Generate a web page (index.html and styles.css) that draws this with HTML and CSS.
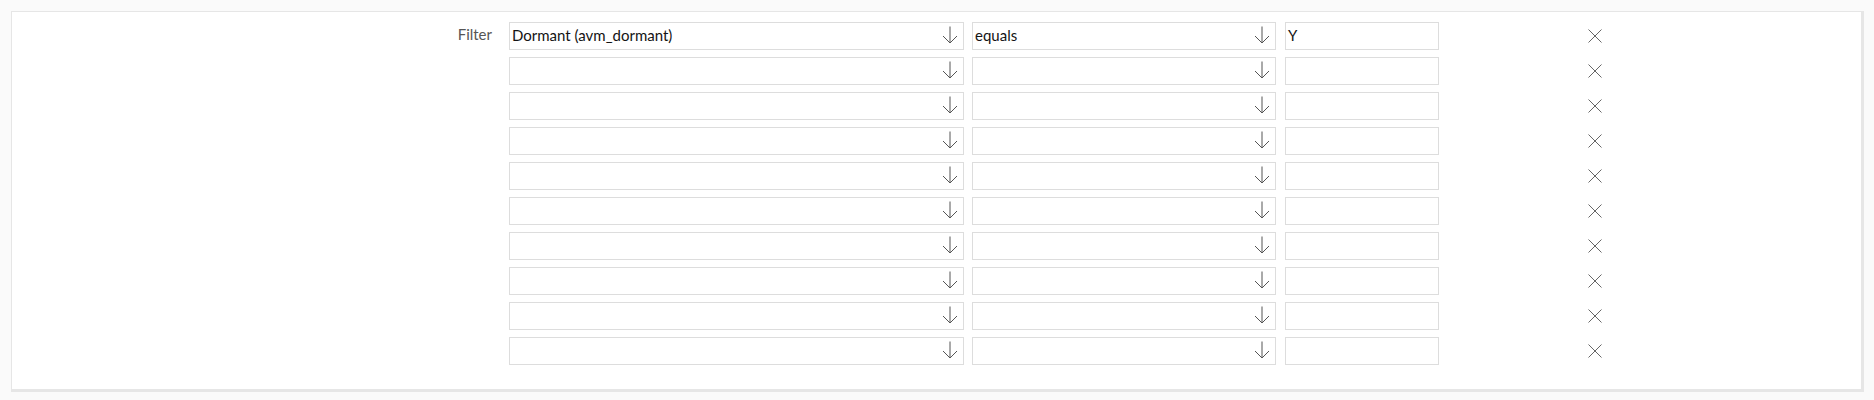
FILE: index.html
```html
<!DOCTYPE html>
<html>
<head>
<meta charset="utf-8">
<link rel="stylesheet" href="styles.css">
</head>
<body>
<div class="page">
  <div class="card">
    <div class="rows">
      <div class="row">
        <div class="label">Filter</div>
        <div class="select field">Dormant (avm_dormant)<svg class="arrow" viewBox="0 0 16 18"><path d="M8 0.5V17M1 10l7 7 7-7"/></svg></div>
        <div class="select op">equals<svg class="arrow" viewBox="0 0 16 18"><path d="M8 0.5V17M1 10l7 7 7-7"/></svg></div>
        <div class="input">Y</div>
        <div class="remove"><svg viewBox="0 0 14 14"><path d="M0.5 0.5l13 13M13.5 0.5l-13 13"/></svg></div>
      </div>
      <div class="row">
        <div class="label"></div>
        <div class="select field"><svg class="arrow" viewBox="0 0 16 18"><path d="M8 0.5V17M1 10l7 7 7-7"/></svg></div>
        <div class="select op"><svg class="arrow" viewBox="0 0 16 18"><path d="M8 0.5V17M1 10l7 7 7-7"/></svg></div>
        <div class="input"></div>
        <div class="remove"><svg viewBox="0 0 14 14"><path d="M0.5 0.5l13 13M13.5 0.5l-13 13"/></svg></div>
      </div>
      <div class="row">
        <div class="label"></div>
        <div class="select field"><svg class="arrow" viewBox="0 0 16 18"><path d="M8 0.5V17M1 10l7 7 7-7"/></svg></div>
        <div class="select op"><svg class="arrow" viewBox="0 0 16 18"><path d="M8 0.5V17M1 10l7 7 7-7"/></svg></div>
        <div class="input"></div>
        <div class="remove"><svg viewBox="0 0 14 14"><path d="M0.5 0.5l13 13M13.5 0.5l-13 13"/></svg></div>
      </div>
      <div class="row">
        <div class="label"></div>
        <div class="select field"><svg class="arrow" viewBox="0 0 16 18"><path d="M8 0.5V17M1 10l7 7 7-7"/></svg></div>
        <div class="select op"><svg class="arrow" viewBox="0 0 16 18"><path d="M8 0.5V17M1 10l7 7 7-7"/></svg></div>
        <div class="input"></div>
        <div class="remove"><svg viewBox="0 0 14 14"><path d="M0.5 0.5l13 13M13.5 0.5l-13 13"/></svg></div>
      </div>
      <div class="row">
        <div class="label"></div>
        <div class="select field"><svg class="arrow" viewBox="0 0 16 18"><path d="M8 0.5V17M1 10l7 7 7-7"/></svg></div>
        <div class="select op"><svg class="arrow" viewBox="0 0 16 18"><path d="M8 0.5V17M1 10l7 7 7-7"/></svg></div>
        <div class="input"></div>
        <div class="remove"><svg viewBox="0 0 14 14"><path d="M0.5 0.5l13 13M13.5 0.5l-13 13"/></svg></div>
      </div>
      <div class="row">
        <div class="label"></div>
        <div class="select field"><svg class="arrow" viewBox="0 0 16 18"><path d="M8 0.5V17M1 10l7 7 7-7"/></svg></div>
        <div class="select op"><svg class="arrow" viewBox="0 0 16 18"><path d="M8 0.5V17M1 10l7 7 7-7"/></svg></div>
        <div class="input"></div>
        <div class="remove"><svg viewBox="0 0 14 14"><path d="M0.5 0.5l13 13M13.5 0.5l-13 13"/></svg></div>
      </div>
      <div class="row">
        <div class="label"></div>
        <div class="select field"><svg class="arrow" viewBox="0 0 16 18"><path d="M8 0.5V17M1 10l7 7 7-7"/></svg></div>
        <div class="select op"><svg class="arrow" viewBox="0 0 16 18"><path d="M8 0.5V17M1 10l7 7 7-7"/></svg></div>
        <div class="input"></div>
        <div class="remove"><svg viewBox="0 0 14 14"><path d="M0.5 0.5l13 13M13.5 0.5l-13 13"/></svg></div>
      </div>
      <div class="row">
        <div class="label"></div>
        <div class="select field"><svg class="arrow" viewBox="0 0 16 18"><path d="M8 0.5V17M1 10l7 7 7-7"/></svg></div>
        <div class="select op"><svg class="arrow" viewBox="0 0 16 18"><path d="M8 0.5V17M1 10l7 7 7-7"/></svg></div>
        <div class="input"></div>
        <div class="remove"><svg viewBox="0 0 14 14"><path d="M0.5 0.5l13 13M13.5 0.5l-13 13"/></svg></div>
      </div>
      <div class="row">
        <div class="label"></div>
        <div class="select field"><svg class="arrow" viewBox="0 0 16 18"><path d="M8 0.5V17M1 10l7 7 7-7"/></svg></div>
        <div class="select op"><svg class="arrow" viewBox="0 0 16 18"><path d="M8 0.5V17M1 10l7 7 7-7"/></svg></div>
        <div class="input"></div>
        <div class="remove"><svg viewBox="0 0 14 14"><path d="M0.5 0.5l13 13M13.5 0.5l-13 13"/></svg></div>
      </div>
      <div class="row">
        <div class="label"></div>
        <div class="select field"><svg class="arrow" viewBox="0 0 16 18"><path d="M8 0.5V17M1 10l7 7 7-7"/></svg></div>
        <div class="select op"><svg class="arrow" viewBox="0 0 16 18"><path d="M8 0.5V17M1 10l7 7 7-7"/></svg></div>
        <div class="input"></div>
        <div class="remove"><svg viewBox="0 0 14 14"><path d="M0.5 0.5l13 13M13.5 0.5l-13 13"/></svg></div>
      </div>
    </div>
  </div>
</div>
</body>
</html>
```

FILE: styles.css
```css
html, body {
  margin: 0;
  padding: 0;
  background: #fafafa;
  font-family: Lato, "Liberation Sans", sans-serif;
}

.page {
  padding: 11px 10px 8px 11px;
}

.card {
  background: #ffffff;
  border: 1px solid #e6e6e6;
  border-right-width: 3px;
  border-bottom-width: 3px;
  padding: 10px 0 24px 0;
}

.rows {
  display: flex;
  flex-direction: column;
  gap: 7px;
}

.row {
  display: flex;
  align-items: center;
  height: 28px;
}

.label {
  width: 497px;
  box-sizing: border-box;
  padding-right: 17px;
  padding-bottom: 4px;
  text-align: right;
  font-size: 15px;
  color: #555555;
}

.select, .input {
  box-sizing: border-box;
  height: 28px;
  border: 1px solid #dddddd;
  background: #ffffff;
  display: flex;
  align-items: center;
  padding-left: 2px;
  padding-bottom: 2px;
  font-size: 15px;
  color: #141414;
}

.select {
  justify-content: space-between;
  padding-right: 5px;
}

.field {
  width: 455px;
}

.op {
  width: 304px;
  margin-left: 8px;
}

.input {
  width: 154px;
  margin-left: 9px;
}

.arrow {
  width: 16px;
  height: 18px;
  flex: none;
  margin-left: auto;
}

.arrow path {
  fill: none;
  stroke: #555555;
  stroke-width: 1;
}

.remove {
  margin-left: 149px;
  width: 14px;
  height: 14px;
  display: flex;
}

.remove svg {
  width: 14px;
  height: 14px;
}

.remove path {
  fill: none;
  stroke: #666666;
  stroke-width: 1;
}
```
